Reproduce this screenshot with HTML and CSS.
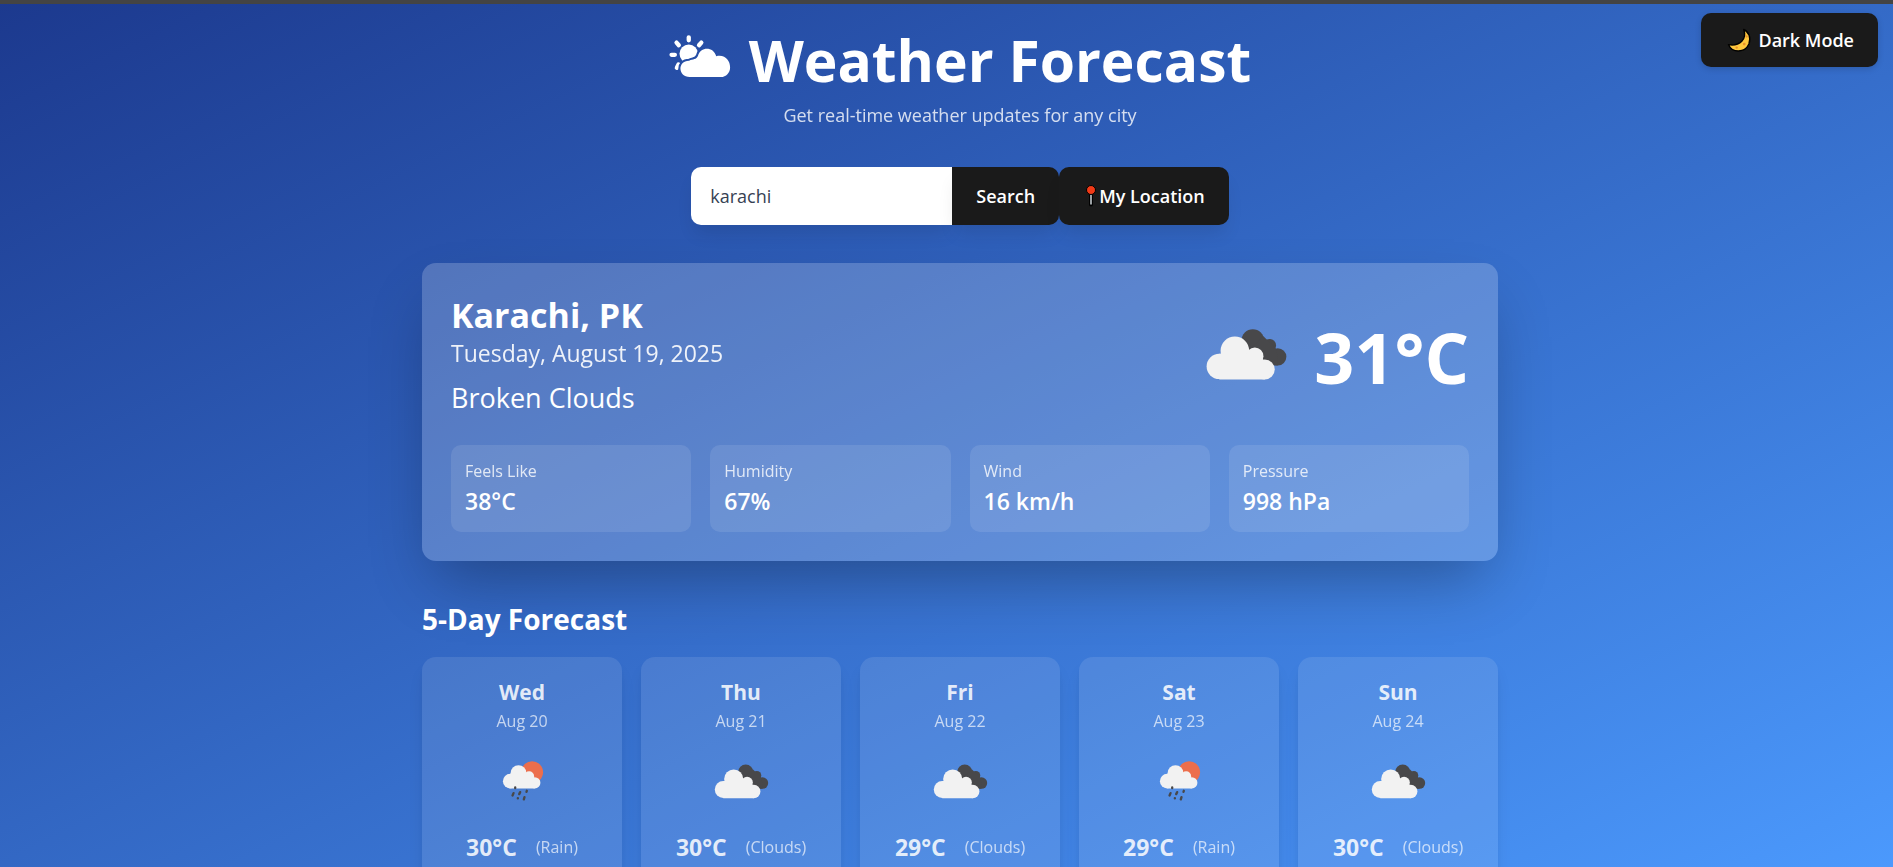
FILE: index.html
```html
<!DOCTYPE html>
<html lang="en">
<head>
<meta charset="utf-8">
<title>Weather Forecast</title>
<meta name="viewport" content="width=device-width, initial-scale=1">
<link rel="stylesheet" href="styles.css">
</head>
<body>
<svg class="sprite" aria-hidden="true">
  <symbol id="clouds" viewBox="-2 -38 346 346">
    <g fill="#48484a"><circle cx="190" cy="93" r="34"/><circle cx="240" cy="108" r="20"/><circle cx="265" cy="142" r="26"/><path d="M180 120 222 80 262 120 265 168H210z"/></g>
    <g fill="#f2f2f2"><circle cx="89" cy="171" r="38"/><circle cx="136" cy="124" r="43"/><circle cx="196" cy="140" r="26"/><circle cx="226" cy="180" r="30"/><path d="M89 133H170L222 150 226 210H89z"/></g>
  </symbol>
  <symbol id="rain" viewBox="10 10 232 232">
    <circle cx="155" cy="98" r="33" fill="#ec6e4c"/>
    <g fill="#f2f2f2"><circle cx="89" cy="125" r="22"/><circle cx="114" cy="101" r="24"/><circle cx="146" cy="110" r="15"/><circle cx="163" cy="130" r="17"/><path d="M89 103H140L160 113 163 147H89z"/></g>
    <path d="M104 144v2M99 161l-3 7M119 158l-3 6M139 154l-1 3M112 176v1M132 173l-2 7" stroke="#48484a" stroke-width="7" stroke-linecap="round"/>
  </symbol>
</svg>

<button class="btn theme-toggle" type="button">
  <svg class="moon" viewBox="0 0 24 24" aria-hidden="true"><path d="M16 3c3 8-3 14.500-13 13C6 23 17 23.500 20.500 15.500 22.500 10 20.500 5 16 3z" fill="#ffc83d" stroke="#000" stroke-width="1.200" stroke-linejoin="round"/><g fill="#e8912d"><circle cx="18.500" cy="9" r="1"/><circle cx="10" cy="18.500" r="1"/><circle cx="16.500" cy="15.500" r="1.200"/></g></svg>
  Dark Mode
</button>

<main class="page">
  <header class="header">
    <h1 class="title">
      <svg class="title-icon" viewBox="16 20 186 130" aria-hidden="true">
        <defs><mask id="sun-cut"><path fill="#fff" d="M0 0h216v168H0z"/><path d="M78 147C42 147 40 98 76 98 88 92 98 96 103 83 110 54 150 54 158 84 186 78 200 98 200 118 200 134 188 147 172 147Z" stroke="#000" stroke-width="13"/></mask></defs>
        <g mask="url(#sun-cut)" fill="#fff"><circle cx="75" cy="77" r="28"/><path d="M75 27v9M38 43l7 8M113 43l-7 8M23 80h10M39 119l5-10" stroke="#fff" stroke-width="13" stroke-linecap="round"/></g>
        <path fill="#fff" d="M78 147C42 147 40 98 76 98 88 92 98 96 103 83 110 54 150 54 158 84 186 78 200 98 200 118 200 134 188 147 172 147Z"/>
      </svg>
      Weather Forecast
    </h1>
    <p class="subtitle">Get real-time weather updates for any city</p>
  </header>

  <form class="search">
    <input class="search-input" type="text" value="karachi" aria-label="City">
    <button class="btn search-btn" type="button">Search</button>
    <button class="btn" type="button"><svg class="pin" viewBox="0 0 16 24" aria-hidden="true"><path d="M8 8v12.500" stroke="#000" stroke-width="4" stroke-linecap="round"/><path d="M8 8v12.500" stroke="#dfe5ea" stroke-width="1.400"/><circle cx="8" cy="6" r="4.500" fill="#f03a17" stroke="#000"/></svg>My Location</button>
  </form>

  <section class="current">
    <div class="current-top">
      <div>
        <h2 class="city">Karachi, PK</h2>
        <p class="date">Tuesday, August 19, 2025</p>
        <p class="condition">Broken Clouds</p>
      </div>
      <div class="reading">
        <svg class="reading-icon" role="img" aria-label="Broken clouds"><use href="#clouds"/></svg>
        <span class="temp">31°C</span>
      </div>
    </div>
    <dl class="stats">
      <div class="stat"><dt>Feels Like</dt><dd>38°C</dd></div>
      <div class="stat"><dt>Humidity</dt><dd>67%</dd></div>
      <div class="stat"><dt>Wind</dt><dd>16 km/h</dd></div>
      <div class="stat"><dt>Pressure</dt><dd>998 hPa</dd></div>
    </dl>
  </section>

  <section>
    <h2 class="section-title">5-Day Forecast</h2>
    <div class="days">
      <article class="day"><h3>Wed</h3><p class="day-date">Aug 20</p><svg class="day-icon" role="img" aria-label="Rain"><use href="#rain"/></svg><p class="day-temp"><b>30°C</b><span>(Rain)</span></p></article>
      <article class="day"><h3>Thu</h3><p class="day-date">Aug 21</p><svg class="day-icon" role="img" aria-label="Clouds"><use href="#clouds"/></svg><p class="day-temp"><b>30°C</b><span>(Clouds)</span></p></article>
      <article class="day"><h3>Fri</h3><p class="day-date">Aug 22</p><svg class="day-icon" role="img" aria-label="Clouds"><use href="#clouds"/></svg><p class="day-temp"><b>29°C</b><span>(Clouds)</span></p></article>
      <article class="day"><h3>Sat</h3><p class="day-date">Aug 23</p><svg class="day-icon" role="img" aria-label="Rain"><use href="#rain"/></svg><p class="day-temp"><b>29°C</b><span>(Rain)</span></p></article>
      <article class="day"><h3>Sun</h3><p class="day-date">Aug 24</p><svg class="day-icon" role="img" aria-label="Clouds"><use href="#clouds"/></svg><p class="day-temp"><b>30°C</b><span>(Clouds)</span></p></article>
    </div>
  </section>
</main>
</body>
</html>
```
FILE: styles.css
```css
* { box-sizing: border-box; margin: 0; padding: 0; }

body {
  min-height: 100vh;
  padding-left: 27px;
  border-top: 4px solid #444;
  background: linear-gradient(to bottom right, #1c398e, #4c9bff) border-box no-repeat;
  color: #fff;
  font-family: "Segoe UI", "Open Sans", "Noto Sans", sans-serif;
  font-size: 18px;
}

.sprite { position: absolute; width: 0; height: 0; }

.page { max-width: 1076px; margin: 0 auto; padding: 20px 0; }

.btn {
  display: inline-flex;
  align-items: center;
  padding: 0 24px;
  border: 0;
  border-radius: 10px;
  background: #1a1a1a;
  color: #fff;
  font: 600 18px/24px "Segoe UI", "Open Sans", "Noto Sans", sans-serif;
  cursor: pointer;
}

.theme-toggle {
  position: absolute;
  top: 13px;
  right: 15px;
  height: 54px;
  gap: 5px;
  box-shadow: 0 2px 6px rgba(0, 0, 0, .15);
}
.moon { width: 28px; height: 28px; }

.header { text-align: center; }
.title {
  display: flex;
  justify-content: center;
  align-items: center;
  gap: 18px;
  font-size: 57px;
  line-height: 72px;
  font-weight: 700;
}
.title-icon { width: 62px; height: 43px; margin-bottom: 8px; }
.subtitle { margin-top: 5px; line-height: 29px; opacity: .8; }

.search { display: flex; justify-content: center; height: 58px; margin: 37px 0 38px; }
.search-input {
  width: 261px;
  padding: 0 19px;
  border: 0;
  border-radius: 10px 0 0 10px;
  background: #fff;
  color: #364153;
  font: inherit;
  box-shadow: 0 12px 18px -4px rgba(0, 0, 0, .1);
}
.search .btn { box-shadow: 0 12px 18px -4px rgba(0, 0, 0, .1); }
.search .search-btn { border-radius: 0 10px 10px 0; }
.pin { width: 16px; height: 24px; }

.current {
  padding: 29px;
  border-radius: 14px;
  background: rgba(255, 255, 255, .2);
  box-shadow: 0 30px 60px -14px rgba(0, 0, 0, .3);
}
.current-top { display: flex; justify-content: space-between; align-items: center; }
.city { font-size: 34px; line-height: 46px; }
.date { font-size: 23px; line-height: 30px; opacity: .9; }
.condition { margin-top: 11px; font-size: 27px; line-height: 38px; }
.reading { display: flex; align-items: center; gap: 10px; }
.reading-icon { width: 115px; height: 115px; }
.temp { padding-top: 4px; font-size: 70px; line-height: 72px; font-weight: 700; }

.stats { display: grid; grid-template-columns: repeat(4, 1fr); gap: 19px; margin-top: 28px; }
.stat { padding: 14px; border-radius: 10px; background: rgba(255, 255, 255, .1); }
.stat dt { font-size: 16px; line-height: 25px; opacity: .8; }
.stat dd { font-size: 23px; line-height: 34px; font-weight: 600; }

.section-title { margin: 39px 0 19px; font-size: 28px; line-height: 38px; }
.days { display: grid; grid-template-columns: repeat(5, 1fr); gap: 19px; }
.day {
  padding: 19px;
  border-radius: 14px;
  background: rgba(255, 255, 255, .1);
  box-shadow: 0 12px 18px -4px rgba(0, 0, 0, .1), 0 5px 8px -5px rgba(0, 0, 0, .1);
  color: rgba(255, 255, 255, .85);
  text-align: center;
}
.day h3 { font-size: 21px; line-height: 33px; }
.day-date { font-size: 16px; line-height: 24px; opacity: .8; }
.day-icon { display: block; width: 77px; height: 77px; margin: 10px auto; }
.day-temp { display: flex; justify-content: center; align-items: center; gap: 19px; line-height: 34px; }
.day-temp b { font-size: 23px; }
.day-temp span { font-size: 16px; opacity: .8; }
```
